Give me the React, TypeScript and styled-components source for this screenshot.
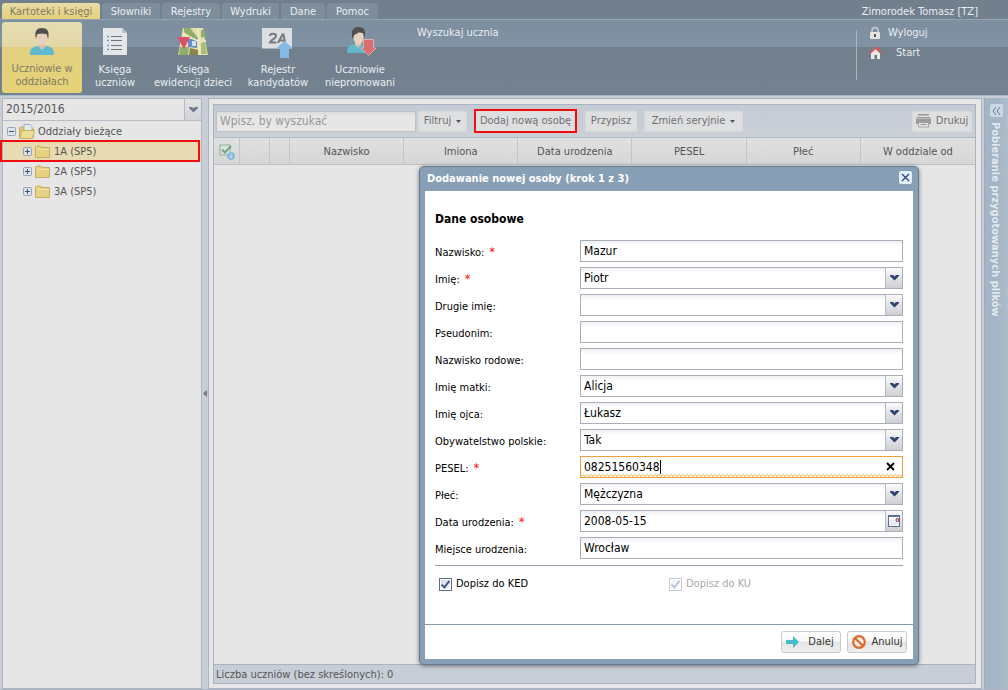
import React from "react";
import styled, { createGlobalStyle, css } from "styled-components";

const GlobalStyle = createGlobalStyle`
  *, *::before, *::after { box-sizing: border-box; }
  body {
    margin: 0;
    font: 11px/14px "DejaVu Sans Condensed", "DejaVu Sans", sans-serif;
    color: #555;
    background: #c9ced6;
  }
  button, input, select { font: inherit; color: inherit; margin: 0; }
`;

const Page = styled.div`
  position: relative;
  display: flex;
  flex-direction: column;
  min-height: 100vh;
`;

/* ---------- top ribbon ---------- */

const Header = styled.header`
  color: #e9edf1;
  background: #727f8d;
  border-bottom: 1px solid #a9b9ca;
`;

const TabBar = styled.div`
  display: flex;
  justify-content: space-between;
  height: 20px;
  padding: 3px 30px 0 2px;
  border-bottom: 1px solid #94a4b1;
`;

const Tabs = styled.nav`
  display: flex;
  gap: 2px;
`;

const Tab = styled.button<{ $w: number; $active?: boolean }>`
  width: ${(p) => p.$w}px;
  height: 16px;
  padding: 2px 0 0;
  border: 0;
  border-radius: 3px 3px 0 0;
  white-space: nowrap;
  line-height: 14px;
  background: ${(p) => (p.$active ? "linear-gradient(#e8dba6, #e6d07c)" : "#7d8d9c")};
  color: ${(p) => (p.$active ? "#7f7b66" : "#e9edf1")};
`;

const UserName = styled.span`
  padding-top: 2px;
`;

const Ribbon = styled.div`
  display: flex;
  justify-content: space-between;
  height: 75px;
  padding: 2px;
  background: linear-gradient(#7d8e9e 0, #8093a4 27px, #727f8d 27px, #748391 100%);
`;

const RibbonGroup = styled.div`
  display: flex;
  gap: 2px;
`;

const RibbonButton = styled.button<{ $w: number; $active?: boolean }>`
  display: flex;
  flex-direction: column;
  align-items: center;
  gap: ${(p) => (p.$active ? 6 : 7)}px;
  width: ${(p) => p.$w}px;
  height: 71px;
  padding: 4px 0 0;
  border: 0;
  border-radius: 3px;
  white-space: pre-line;
  text-align: center;
  line-height: 13px;
  color: #e9edf1;
  background: none;
  ${(p) =>
    p.$active &&
    css`
      color: #7f7b66;
      background: linear-gradient(#e6dcb3 0, #e4d8a6 25px, #e2cf81 25px, #e6d377 100%);
    `}
`;

const SearchLabel = styled.span`
  padding: 4px 0 0 13px;
  white-space: nowrap;
`;

const Session = styled.div`
  display: flex;
  flex-direction: column;
  gap: 6px;
  width: 150px;
  height: 50px;
  margin-top: 8px;
  border-left: 1px solid #a9b4be;
`;

const SessionButton = styled.button<{ $gap: number }>`
  display: flex;
  align-items: center;
  gap: ${(p) => p.$gap}px;
  height: 14px;
  margin-top: -4px;
  padding: 0 0 0 12px;
  border: 0;
  background: none;
  & + & { margin-top: 0; }
`;

/* ---------- body ---------- */

const Body = styled.div`
  flex: 1;
  display: grid;
  grid-template-columns: 200px 6px minmax(0, 1fr) 26px;
  padding: 2px 0 0 2px;
  border-bottom: 1px solid #a9b3c2;
`;

const Side = styled.aside`
  background: #e6e6e6;
  border: 1px solid #adb5c0;
`;

const YearBox = styled.div`
  position: relative;
  height: 22px;
  border-bottom: 1px solid #b6bdc7;
`;

const YearSelect = styled.select`
  width: 100%;
  height: 21px;
  padding: 0 3px 1px;
  border: 0;
  appearance: none;
  background: #e6e6e6;
  font-size: 12px;
`;

const Trigger = styled.span<{ $dim?: boolean }>`
  position: absolute;
  top: 0;
  right: 0;
  bottom: 0;
  display: grid;
  place-items: center;
  width: 17px;
  pointer-events: none;
  border-left: 1px solid #b5b8c8;
  background: ${(p) => (p.$dim ? "linear-gradient(#e4e4e4, #d2d3d6)" : "linear-gradient(#fbfbfb, #e2e3e6 50%, #cfd0d4)")};
`;

const Tree = styled.ul`
  list-style: none;
  margin: 0;
  padding: 0;
`;

const TreeRow = styled.li<{ $depth: number; $marked?: boolean }>`
  position: relative;
  display: flex;
  align-items: center;
  gap: 3px;
  height: 20px;
  padding-top: 1px;
  padding-left: ${(p) => 4 + p.$depth * 16}px;
  ${(p) =>
    p.$marked &&
    css`
      background: #e8dab2;
      &::after {
        content: "";
        position: absolute;
        inset: -1px 1px -1px -3px;
        border: 2px solid #f00d0d;
      }
    `}
`;

const Splitter = styled.div`
  display: flex;
  align-items: center;
  justify-content: center;
`;

const Main = styled.main`
  display: flex;
  flex-direction: column;
  padding: 5px 5px 4px 4px;
  border: 1px solid #a9b3c2;
  background: #e6e6e6;
`;

const Grid = styled.section`
  flex: 1;
  display: flex;
  flex-direction: column;
  border: 1px solid #a9b3c2;
`;

const Toolbar = styled.div`
  display: flex;
  align-items: center;
  height: 33px;
  padding: 0 3px 0 2px;
  background: linear-gradient(#c5cbd4, #cbd0d7);
  border-bottom: 1px solid #b2bac4;
`;

const SearchInput = styled.input`
  width: 200px;
  height: 21px;
  padding: 0 3px;
  border: 1px solid #bcc1ca;
  background: linear-gradient(#dadbdd, #e6e6e6 4px);
  font-size: 12px;
  &::placeholder { color: #999; opacity: 1; }
`;

const ToolButton = styled.button<{ $w: number; $ml: number; $marked?: boolean }>`
  display: flex;
  align-items: center;
  justify-content: center;
  gap: 5px;
  width: ${(p) => p.$w}px;
  height: ${(p) => (p.$marked ? 24 : 21)}px;
  margin-left: ${(p) => p.$ml}px;
  padding: 0;
  border: ${(p) => (p.$marked ? "2px solid #f00d0d" : "1px solid #d8d9db")};
  border-radius: ${(p) => (p.$marked ? 0 : 2)}px;
  white-space: nowrap;
  color: #717171;
  background: #dedfe1;
`;

const Push = styled.div`
  flex: 1;
`;

const Table = styled.table`
  width: 100%;
  border-collapse: separate;
  border-spacing: 0;
  table-layout: fixed;
`;

const Th = styled.th`
  height: 27px;
  padding: 1px 0 0;
  font-weight: normal;
  text-align: center;
  border-right: 1px solid #c4c5c7;
  border-bottom: 1px solid #bfc0c3;
  background: linear-gradient(#e0e0e0, #d6d6d6);
  &:last-child { border-right: 0; }
  svg { display: block; margin: 0 auto; }
`;

const Status = styled.div`
  height: 19px;
  margin-top: auto;
  padding: 3px 2px 0;
  border-top: 1px solid #a9b3c2;
  background: #c8ced6;
`;

const Files = styled.aside`
  display: flex;
  flex-direction: column;
  align-items: flex-start;
  gap: 5px;
  margin-left: 2px;
  padding: 6px 0 0 5px;
  border-left: 1px solid #98abc0;
  background: linear-gradient(90deg, #a5b5c6, #a2b4c6 50%, #b0bdca);
  color: #e4e8ed;
  font-weight: bold;
`;

const Collapse = styled.button`
  display: grid;
  place-items: center;
  width: 13px;
  height: 13px;
  padding: 0;
  border: 0;
  border-radius: 2px;
  background: #ccd8e4;
`;

const FilesTitle = styled.span`
  writing-mode: vertical-rl;
  white-space: nowrap;
  line-height: 11px;
`;

/* ---------- dialog ---------- */

const Dialog = styled.section`
  position: absolute;
  top: 166px;
  left: 419px;
  width: 500px;
  padding: 0 5px 5px;
  border: 1px solid #64798e;
  border-radius: 5px;
  background: #88a0b6;
  box-shadow: 0 1px 4px #0007;
  color: #000;
`;

const DialogHead = styled.div`
  display: flex;
  align-items: center;
  justify-content: space-between;
  height: 24px;
  padding: 0 1px 0 2px;
`;

const DialogTitle = styled.h2`
  margin: 0;
  font-size: 11px;
  color: #fff;
`;

const Close = styled.button`
  display: grid;
  place-items: center;
  width: 13px;
  height: 13px;
  margin-bottom: 3px;
  padding: 0;
  border: 0;
  border-radius: 2px;
  background: #e3efff;
`;

const Form = styled.form`
  background: #fff;
`;

const Fields = styled.div`
  display: flex;
  flex-direction: column;
  gap: 5px;
  height: 433px;
  padding: 20px 10px 0;
`;

const Heading = styled.h3`
  margin: 0 0 8px;
  font-size: 12px;
  line-height: 16px;
`;

const FieldRow = styled.div`
  display: grid;
  grid-template-columns: 145px minmax(0, 1fr);
  height: 22px;
`;

const Label = styled.label`
  padding-top: 6px;
`;

const Star = styled.span`
  margin-left: 2px;
  color: #f00;
  font-size: 12px;
  line-height: 12px;
`;

const Control = styled.div`
  position: relative;
`;

const fieldBox = css<{ $error?: boolean }>`
  width: 100%;
  height: 22px;
  padding: 0 3px 1px;
  border: 1px solid ${(p) => (p.$error ? "#f0a040" : "#a9aeb8")};
  border-radius: 0;
  outline: 0;
  appearance: none;
  color: #000;
  font-size: 12px;
  background: ${(p) => (p.$error ? "#fff" : "linear-gradient(#eef0f2, #fff 5px)")};
`;

const TextField = styled.input<{ $error?: boolean }>`
  ${fieldBox}
`;

const SelectField = styled.select<{ $error?: boolean }>`
  ${fieldBox}
`;

const FieldTrigger = styled(Trigger)`
  inset: 1px 1px 1px auto;
`;

const DateButton = styled.button`
  position: absolute;
  inset: 1px 1px 1px auto;
  display: grid;
  place-items: center;
  width: 17px;
  padding: 0;
  border: 0;
  border-left: 1px solid #b5b8c8;
  background: linear-gradient(#fbfbfb, #e2e3e6 50%, #cfd0d4);
`;

const Clear = styled.button`
  position: absolute;
  inset: 6px 8px auto auto;
  display: grid;
  padding: 0;
  border: 0;
  background: none;
`;

const Caret = styled.span`
  position: absolute;
  top: 4px;
  left: 4px;
  height: 14px;
  border-right: 1px solid #000;
  color: transparent;
  font-size: 12px;
  pointer-events: none;
`;

const Wave = styled.svg`
  position: absolute;
  left: 1px;
  bottom: 1px;
  width: calc(100% - 2px);
  height: 3px;
`;

const Checks = styled.div`
  display: grid;
  grid-template-columns: 230px 1fr;
  margin-top: 1px;
  padding: 11px 4px;
  border-top: 1px solid #9aa5b3;
`;

const CheckLabel = styled.label<{ $off?: boolean }>`
  display: flex;
  align-items: center;
  gap: 4px;
  color: ${(p) => (p.$off ? "#aaa" : "#000")};
`;

const Check = styled.input`
  position: relative;
  appearance: none;
  width: 13px;
  height: 13px;
  border: 1px solid #5f6f86;
  background: linear-gradient(135deg, #cfd4dc, #fff);
  box-shadow: inset 0 0 0 1px #fff;
  &:checked::after {
    content: "";
    position: absolute;
    top: 0;
    left: 3px;
    width: 5px;
    height: 9px;
    border: solid #44558f;
    border-width: 0 2px 2px 0;
    transform: rotate(38deg);
  }
  &:disabled { opacity: 0.35; }
`;

const Footer = styled.div`
  display: flex;
  justify-content: flex-end;
  gap: 6px;
  height: 35px;
  padding: 6px 6px 0 0;
  border-top: 1px solid #8497ab;
`;

const ActionButton = styled.button`
  display: flex;
  align-items: center;
  gap: 4px;
  width: 60px;
  height: 22px;
  padding: 0 3px;
  border: 1px solid #cbcbcb;
  border-radius: 3px;
  white-space: nowrap;
  color: #333;
  background: linear-gradient(#fff 0, #f8f8f8 45%, #e4e4e4 50%, #efefef 100%);
  & > span { flex: 1; text-align: center; }
`;

/* ---------- drawings ---------- */

const Chevron = ({ color = "#2f4370" }: { color?: string }) => (
  <svg width="9" height="6" viewBox="0 0 9 6">
    <path d="M0 0h3l1.500 1.500L6 0h3v1L4.500 5.500 0 1z" fill={color} />
  </svg>
);

const SmallArrow = () => (
  <svg width="5" height="3" viewBox="0 0 5 3">
    <path d="M0 0h5L2.500 3z" fill="#555" />
  </svg>
);

const Person = () => (
  <svg width="30" height="30" viewBox="0 0 30 30">
    <path d="M3 29c0-5 1-8 7-9l5 1 5-1c6 1 7 4 7 9z" fill="#5fb9d0" />
    <path d="M12 17h6v4l-3 3-3-3z" fill="#dcbfa8" />
    <ellipse cx="15" cy="12.500" rx="5" ry="7" fill="#e8cfbd" />
    <path d="M9 13C7 5 10 2 15 2s8 3 6 11c-.8-3-.6-4.500-2-5-3-.8-5-.8-8 0-1.400.5-1.200 2-2 5z" fill="#4f4f50" />
  </svg>
);

const PersonDown = () => (
  <svg width="32" height="30" viewBox="0 0 32 30">
    <path d="M3 27c0-5 1-8 7-9l4 1 5-1 6 9z" fill="#62b8cb" />
    <path d="M11 15h6v4l-3 3-3-3z" fill="#dcbfa8" />
    <ellipse cx="14.500" cy="11" rx="5" ry="7.500" fill="#e8d2bd" />
    <path d="M8.500 13C6.500 4 9.500 1 14.500 1s8 3 6 11c-.8-3-.6-4.500-2-5-3-.8-4-.8-6 1-2 0-3 2-4 5z" fill="#4f4f50" />
    <path d="M19.500 13.500h10V22H32l-7.500 7.500L17 22h2.500z" fill="#d96e70" stroke="#e9b9b9" strokeWidth=".8" />
  </svg>
);

const ListIcon = () => (
  <svg width="30" height="30" viewBox="0 0 30 30">
    <path d="M3 2h19l5 5v22H3z" fill="#e4e6e8" />
    <path d="M22 2v5h5z" fill="#bcc3ca" />
    <path d="M11 10.500h11M11 14.500h11M11 19.500h11M11 23.500h11" stroke="#70757a" />
    <path d="M7 10.500h2M7 14.500h2M7 19.500h2M7 23.500h2" stroke="#62a0d0" strokeWidth="1.500" />
  </svg>
);

const MapIcon = () => (
  <svg width="32" height="30" viewBox="0 0 32 30">
    <path d="M6 2h20l5 27H1z" fill="#e4dfa8" />
    <path d="M7 2h6l9 11-4 1L7 6zM24 4h3l2 8-5-1zM3 21h9l-1 8H2z" fill="#8fae6a" />
    <path d="M13 22l8 2v5h-9z" fill="#8b8550" />
    <path d="M24 15h4l2 13h-6z" fill="#a9bd78" />
    <path d="M11 13h9v9l-9-1z" fill="#6b8bc8" />
    <path d="M15 15h4v5h-4z" fill="#d6dde8" />
    <path d="M21 2l2 27M6 8l17 8 6-1" stroke="#f0ebcf" strokeWidth="1.500" fill="none" />
    <path d="M0 11h13L7 23z" fill="#d8526a" />
  </svg>
);

const CandidateIcon = () => (
  <svg width="32" height="30" viewBox="0 0 32 30" overflow="visible">
    <path d="M0 2h30v20.500H0z" fill="#dcdfe2" />
    <path d="M8 10c0-3 6-3 6 0 0 2.500-5 3.500-6 6.500h6.500M16 17l4.500-8.500h1L23 17M18 14.500h5" fill="none" stroke="#777b80" strokeWidth="2" />
    <path d="M22.500 15l8 7H27v10h-9V22h-3.500z" fill="#83bbe6" />
  </svg>
);

const Lock = () => (
  <svg width="12" height="14" viewBox="0 0 12 14">
    <path d="M3 7V4.500a3 3 0 016 0V7" fill="none" stroke="#c9ced2" strokeWidth="1.500" />
    <rect x="1" y="6" width="10" height="7" rx="1" fill="#e4e4e2" />
    <path d="M6 8v3" stroke="#555" strokeWidth="2" />
  </svg>
);

const Home = () => (
  <svg width="13" height="14" viewBox="0 0 13 14">
    <path d="M2 7l4.500-4L11 7v6H2z" fill="#e9e9e9" />
    <path d="M0 8l6.500-6L13 8M10 1v4" fill="none" stroke="#cf5961" strokeWidth="1.700" />
    <path d="M5.500 9h2.500v4H5.500z" fill="#6b747c" />
  </svg>
);

const Toggle = ({ open }: { open?: boolean }) => (
  <svg width="9" height="9" viewBox="0 0 9 9">
    <rect x=".5" y=".5" width="8" height="8" rx="1" fill="#dfe3e8" stroke="#94a3b6" />
    <path d={open ? "M2 4.500h5" : "M2 4.500h5M4.500 2v5"} stroke="#3c5878" />
  </svg>
);

const Folder = ({ open }: { open?: boolean }) => (
  <svg width="16" height="16" viewBox="0 0 16 16">
    {open ? (
      <>
        <path d="M.5 13.500V4l1-1h4l1 2h8v8.500z" fill="#e0c76c" stroke="#c8ae5c" />
        <path d="M5 .5h6l2 2V9H5z" fill="#e6eaee" stroke="#9db0c4" />
        <path d="M.8 14.500L3 6.500h12.500L13.500 14.500z" fill="#ecdc98" stroke="#c8ae5c" />
      </>
    ) : (
      <>
        <path d="M.5 13.500V3l1-1h4l1 1.500h8v10z" fill="#e6d180" stroke="#c8ae5c" />
        <path d="M2 5.500h12" stroke="#f0e3ac" />
      </>
    )}
  </svg>
);

const CheckInfo = () => (
  <svg width="18" height="18" viewBox="0 0 18 18">
    <rect x="2" y="2" width="10" height="10" fill="#dce2dc" stroke="#8fae98" />
    <path d="M4 6.500l3 3 6-6.500" fill="none" stroke="#6fa877" strokeWidth="2" />
    <circle cx="13" cy="13" r="4" fill="#8cbcd6" />
    <path d="M13 10.500v1M13 12.500V15" stroke="#eef" />
  </svg>
);

const Printer = () => (
  <svg width="15" height="14" viewBox="0 0 15 14">
    <path d="M2 0h11v1.500H2zM1 3h13v1H1z" fill="#999" />
    <path d="M0 4.500h15V10H0z" fill="#999c9f" />
    <path d="M2.500 8.500h10V13h-10z" fill="#e3e3e3" stroke="#999" strokeWidth=".8" />
    <path d="M4.500 10.500h6" stroke="#999" />
  </svg>
);

const CrossIcon = () => (
  <svg width="9" height="9" viewBox="0 0 9 9">
    <path d="M1 1l7 7M8 1L1 8" stroke="#2d4675" strokeWidth="1.300" />
  </svg>
);

const ClearIcon = () => (
  <svg width="9" height="9" viewBox="0 0 9 9">
    <path d="M1 1l7 7M8 1L1 8" stroke="#000" strokeWidth="1.800" />
  </svg>
);

const Calendar = () => (
  <svg width="13" height="13" viewBox="0 0 13 13">
    <rect x=".5" y=".5" width="11" height="11" fill="#fff" stroke="#5f7193" />
    <path d="M0 1h12" stroke="#5f7193" strokeWidth="2" />
    <path d="M3.500 3v8M5.500 3v8M7.500 7v4M9.500 8v3M1 5.500h6M1 7.500h10M1 9.500h10" stroke="#d6dbe3" strokeWidth=".6" />
    <circle cx="9.500" cy="5" r="1.500" fill="#fff" stroke="#6d1030" />
  </svg>
);

const ArrowRight = () => (
  <svg width="16" height="16" viewBox="0 0 16 16">
    <path d="M1 6h7V2l6 6-6 6v-4H1z" fill="#45bccb" />
  </svg>
);

const Ban = () => (
  <svg width="16" height="16" viewBox="0 0 16 16">
    <circle cx="8" cy="8" r="5.800" fill="#fbeee6" stroke="#dc6a2e" strokeWidth="2.200" />
    <path d="M4 4l8 8" stroke="#dc6a2e" strokeWidth="2.200" />
  </svg>
);

/* ---------- data ---------- */

const tabs: [string, number][] = [
  ["Kartoteki i księgi", 98],
  ["Słowniki", 58],
  ["Rejestry", 58],
  ["Wydruki", 57],
  ["Dane", 44],
  ["Pomoc", 51],
];

const ribbon: [string, number, React.ReactNode][] = [
  ["Uczniowie w\noddziałach", 80, <Person />],
  ["Księga\nuczniów", 62, <ListIcon />],
  ["Księga\newidencji dzieci", 90, <MapIcon />],
  ["Rejestr\nkandydatów", 76, <CandidateIcon />],
  ["Uczniowie\nniepromowani", 84, <PersonDown />],
];

type FieldKind = "text" | "select" | "error" | "date";

const fields: { id: string; label: string; value: string; kind: FieldKind; required?: boolean }[] = [
  { id: "nazwisko", label: "Nazwisko:", value: "Mazur", kind: "text", required: true },
  { id: "imie", label: "Imię:", value: "Piotr", kind: "select", required: true },
  { id: "drugie", label: "Drugie imię:", value: "", kind: "select" },
  { id: "pseudonim", label: "Pseudonim:", value: "", kind: "text" },
  { id: "rodowe", label: "Nazwisko rodowe:", value: "", kind: "text" },
  { id: "matka", label: "Imię matki:", value: "Alicja", kind: "select" },
  { id: "ojciec", label: "Imię ojca:", value: "Łukasz", kind: "select" },
  { id: "obywatelstwo", label: "Obywatelstwo polskie:", value: "Tak", kind: "select" },
  { id: "pesel", label: "PESEL:", value: "08251560348", kind: "error", required: true },
  { id: "plec", label: "Płeć:", value: "Mężczyzna", kind: "select" },
  { id: "data", label: "Data urodzenia:", value: "2008-05-15", kind: "date", required: true },
  { id: "miejsce", label: "Miejsce urodzenia:", value: "Wrocław", kind: "text" },
];

const columns = ["Nazwisko", "Imiona", "Data urodzenia", "PESEL", "Płeć", "W oddziale od"];

const Field = ({ id, label, value, kind, required }: (typeof fields)[number]) => (
  <FieldRow>
    <Label htmlFor={id}>
      {label} {required && <Star>*</Star>}
    </Label>
    <Control>
      {kind === "select" ? (
        <>
          <SelectField id={id} defaultValue={value}>
            <option>{value}</option>
          </SelectField>
          <FieldTrigger>
            <Chevron />
          </FieldTrigger>
        </>
      ) : (
        <TextField id={id} defaultValue={value} $error={kind === "error"} />
      )}
      {kind === "date" && (
        <DateButton type="button" aria-label="Kalendarz">
          <Calendar />
        </DateButton>
      )}
      {kind === "error" && (
        <>
          <Wave aria-hidden="true">
            <defs>
              <pattern id="wave" width="4" height="3" patternUnits="userSpaceOnUse">
                <path d="M-1 3.500L2 .5l3 3" fill="none" stroke="#f0a63c" />
              </pattern>
            </defs>
            <rect width="100%" height="3" fill="url(#wave)" />
          </Wave>
          <Caret aria-hidden="true">{value}</Caret>
          <Clear type="button" aria-label="Wyczyść">
            <ClearIcon />
          </Clear>
        </>
      )}
    </Control>
  </FieldRow>
);

export default function App() {
  return (
    <Page>
      <GlobalStyle />
      <Header>
        <TabBar>
          <Tabs>
            {tabs.map(([name, w], i) => (
              <Tab key={name} $w={w} $active={i === 0}>
                {name}
              </Tab>
            ))}
          </Tabs>
          <UserName>Zimorodek Tomasz [TZ]</UserName>
        </TabBar>
        <Ribbon>
          <RibbonGroup>
            {ribbon.map(([name, w, icon], i) => (
              <RibbonButton key={name} $w={w} $active={i === 0}>
                {icon}
                <span>{name}</span>
              </RibbonButton>
            ))}
            <SearchLabel>Wyszukaj ucznia</SearchLabel>
          </RibbonGroup>
          <Session>
            <SessionButton $gap={7}>
              <Lock />
              Wyloguj
            </SessionButton>
            <SessionButton $gap={14}>
              <Home />
              Start
            </SessionButton>
          </Session>
        </Ribbon>
      </Header>

      <Body>
        <Side>
          <YearBox>
            <YearSelect aria-label="Rok szkolny" defaultValue="2015/2016">
              <option>2015/2016</option>
            </YearSelect>
            <Trigger $dim>
              <Chevron color="#6a7a90" />
            </Trigger>
          </YearBox>
          <Tree>
            <TreeRow $depth={0}>
              <Toggle open />
              <Folder open />
              Oddziały bieżące
            </TreeRow>
            {["1A (SP5)", "2A (SP5)", "3A (SP5)"].map((name, i) => (
              <TreeRow key={name} $depth={1} $marked={i === 0}>
                <Toggle />
                <Folder />
                {name}
              </TreeRow>
            ))}
          </Tree>
        </Side>
        <Splitter>
          <svg width="4" height="7" viewBox="0 0 4 7">
            <path d="M4 0v7L0 3.500z" fill="#777" />
          </svg>
        </Splitter>
        <Main>
          <Grid>
            <Toolbar>
              <SearchInput placeholder="Wpisz, by wyszukać" aria-label="Wyszukaj" />
              <ToolButton $w={49} $ml={2}>
                Filtruj <SmallArrow />
              </ToolButton>
              <ToolButton $w={103} $ml={7} $marked>
                Dodaj nową osobę
              </ToolButton>
              <ToolButton $w={52} $ml={8}>
                Przypisz
              </ToolButton>
              <ToolButton $w={99} $ml={7}>
                Zmień seryjnie <SmallArrow />
              </ToolButton>
              <Push />
              <ToolButton $w={60} $ml={7}>
                <Printer /> Drukuj
              </ToolButton>
            </Toolbar>
            <Table>
              <colgroup>
                <col width="26" />
                <col width="30" />
                <col width="20" />
                {columns.map((c) => (
                  <col key={c} />
                ))}
              </colgroup>
              <thead>
                <tr>
                  <Th>
                    <CheckInfo />
                  </Th>
                  <Th />
                  <Th />
                  {columns.map((c) => (
                    <Th key={c}>{c}</Th>
                  ))}
                </tr>
              </thead>
            </Table>
            <Status>Liczba uczniów (bez skreślonych): 0</Status>
          </Grid>
        </Main>
        <Files>
          <Collapse aria-label="Rozwiń">
            <svg width="9" height="8" viewBox="0 0 9 8">
              <path d="M4 0L1 4l3 4M8 0L5 4l3 4" fill="none" stroke="#5d7791" />
            </svg>
          </Collapse>
          <FilesTitle>Pobieranie przygotowanych plików</FilesTitle>
        </Files>
      </Body>

      <Dialog role="dialog" aria-labelledby="dialog-title">
        <DialogHead>
          <DialogTitle id="dialog-title">Dodawanie nowej osoby (krok 1 z 3)</DialogTitle>
          <Close aria-label="Zamknij">
            <CrossIcon />
          </Close>
        </DialogHead>
        <Form>
          <Fields>
            <Heading>Dane osobowe</Heading>
            {fields.map((f) => (
              <Field key={f.id} {...f} />
            ))}
            <Checks>
              <CheckLabel>
                <Check type="checkbox" defaultChecked />
                Dopisz do KED
              </CheckLabel>
              <CheckLabel $off>
                <Check type="checkbox" defaultChecked disabled />
                Dopisz do KU
              </CheckLabel>
            </Checks>
          </Fields>
          <Footer>
            <ActionButton type="button">
              <ArrowRight />
              <span>Dalej</span>
            </ActionButton>
            <ActionButton type="button">
              <Ban />
              <span>Anuluj</span>
            </ActionButton>
          </Footer>
        </Form>
      </Dialog>
    </Page>
  );
}
